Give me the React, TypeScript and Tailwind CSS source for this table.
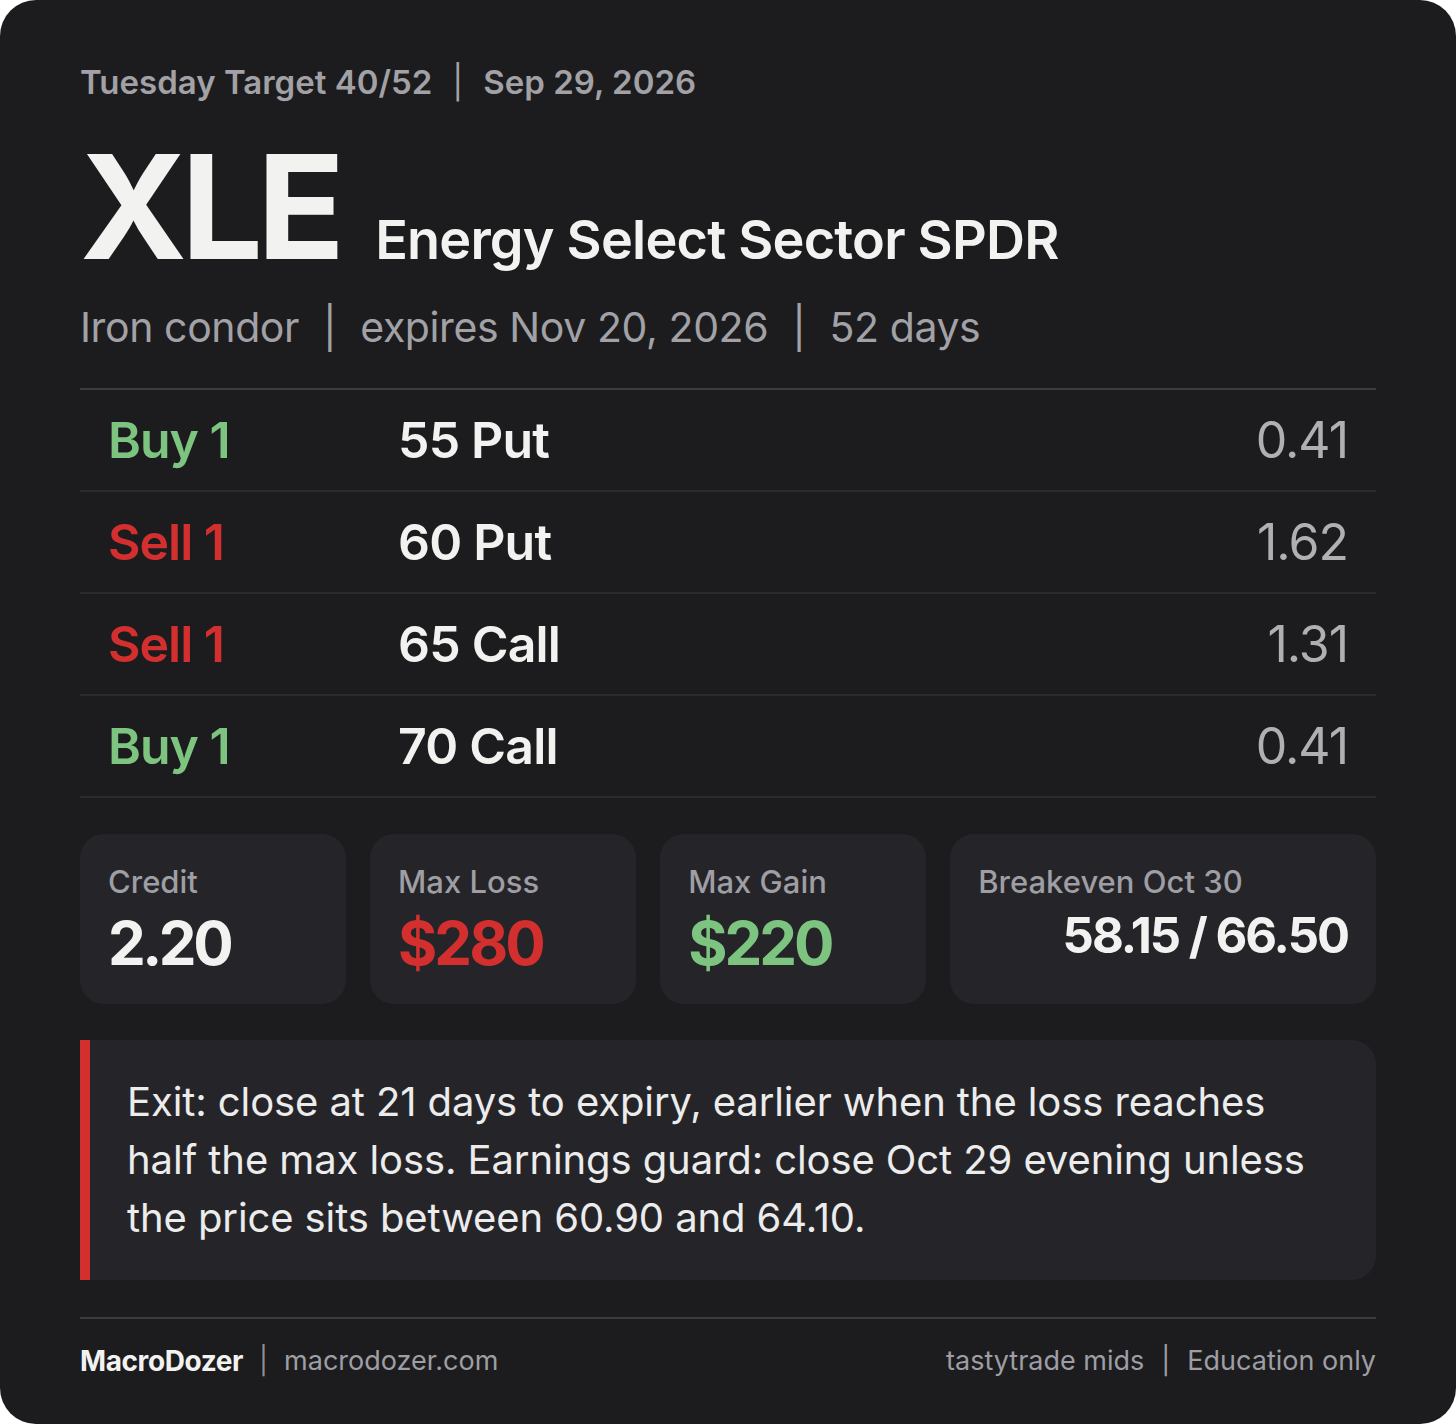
import React from "react";

const legs = [
  { side: "Buy 1", buy: true, strike: "55 Put", price: "0.41" },
  { side: "Sell 1", buy: false, strike: "60 Put", price: "1.62" },
  { side: "Sell 1", buy: false, strike: "65 Call", price: "1.31" },
  { side: "Buy 1", buy: true, strike: "70 Call", price: "0.41" },
];

export default function App() {
  return (
    <div className="w-[1456px] h-[1424px] bg-white" style={{ fontFamily: "Inter, 'Noto Sans', sans-serif" }}>
      <div className="w-full h-full bg-[#1c1c1e] rounded-[36px] px-[80px] pt-[60px] flex flex-col">
        <div className="flex items-center text-[33px] font-semibold text-[#a1a1a6] leading-[44px]">
          <span>Tuesday Target 40/52</span>
          <span className="mx-[20px] font-normal">|</span>
          <span>Sep 29, 2026</span>
        </div>

        <div className="flex items-baseline mt-[43px] gap-[36px]">
          <span className="text-[145px] font-bold leading-[120px] tracking-[-6px] text-[#f2f2f0]">XLE</span>
          <span className="text-[54px] font-semibold text-[#f2f2f0] tracking-[-0.8px]">Energy Select Sector SPDR</span>
        </div>

        <div className="flex items-center mt-[21px] text-[41px] text-[#a1a1a6] leading-[52px] tracking-[-0.4px]">
          <span>Iron condor</span>
          <span className="mx-[24px]">|</span>
          <span>expires Nov 20, 2026</span>
          <span className="mx-[24px]">|</span>
          <span>52 days</span>
        </div>

        <div className="mt-[35px] border-t-2 border-[#3c3c3f]">
          {legs.map((l, i) => (
            <div key={i} className="flex items-center h-[102px] border-b-2 border-[#2b2b2e] px-[28px]">
              <span
                className={
                  "w-[290px] text-[50px] font-semibold tracking-[-1px] " +
                  (l.buy ? "text-[#7cc47f]" : "text-[#d32f2f]")
                }
              >
                {l.side}
              </span>
              <span className="flex-1 text-[50px] font-semibold text-[#f2f2f0] tracking-[-0.8px]">{l.strike}</span>
              <span className="text-[50px] text-[#b0b0b4] tracking-[-1px]">{l.price}</span>
            </div>
          ))}
        </div>

        <div className="grid grid-cols-[1fr_1fr_1fr_1.6fr] gap-[24px] mt-[36px] h-[170px]">
          <div className="bg-[#252529] rounded-[24px] px-[28px] pt-[30px]">
            <div className="text-[31px] font-medium text-[#9e9ea4] leading-[36px]">Credit</div>
            <div className="text-[60px] font-bold text-[#f2f2f0] tracking-[-3.5px] leading-[70px] mt-[8px]">2.20</div>
          </div>
          <div className="bg-[#252529] rounded-[24px] px-[28px] pt-[30px]">
            <div className="text-[31px] font-medium text-[#9e9ea4] leading-[36px]">Max Loss</div>
            <div className="text-[60px] font-bold text-[#d32f2f] tracking-[-3px] leading-[70px] mt-[8px]">$280</div>
          </div>
          <div className="bg-[#252529] rounded-[24px] px-[28px] pt-[30px]">
            <div className="text-[31px] font-medium text-[#9e9ea4] leading-[36px]">Max Gain</div>
            <div className="text-[60px] font-bold text-[#7cc47f] tracking-[-3px] leading-[70px] mt-[8px]">$220</div>
          </div>
          <div className="bg-[#252529] rounded-[24px] px-[28px] pt-[30px] flex flex-col">
            <div className="text-[31px] font-medium text-[#9e9ea4] leading-[36px]">Breakeven Oct 30</div>
            <div className="text-[49px] font-bold text-[#f2f2f0] tracking-[-2px] leading-[60px] mt-[6px] text-right">
              58.15 / 66.50
            </div>
          </div>
        </div>

        <div className="mt-[36px] flex bg-[#252529] rounded-r-[24px] h-[240px]">
          <div className="w-[10px] bg-[#d32f2f] shrink-0" />
          <div className="pl-[37px] pt-[33px] w-[1240px] text-[40px] leading-[58px] text-[#ececec] tracking-[-0.1px]">
            Exit: close at 21 days to expiry, earlier when the loss reaches half the max loss. Earnings guard: close Oct
            29 evening unless the price sits between 60.90 and 64.10.
          </div>
        </div>

        <div className="mt-[37px] border-t-2 border-[#3c3c3f] flex items-center justify-between pt-[22px] text-[27px] leading-[40px]">
          <div className="flex items-center">
            <span className="font-bold text-[28px] text-[#f2f2f0] tracking-[-0.4px]">MacroDozer</span>
            <span className="mx-[16px] text-[#8e8e93]">|</span>
            <span className="text-[#9e9ea4]">macrodozer.com</span>
          </div>
          <div className="flex items-center text-[#9e9ea4]">
            <span>tastytrade mids</span>
            <span className="mx-[17px]">|</span>
            <span>Education only</span>
          </div>
        </div>
      </div>
    </div>
  );
}
